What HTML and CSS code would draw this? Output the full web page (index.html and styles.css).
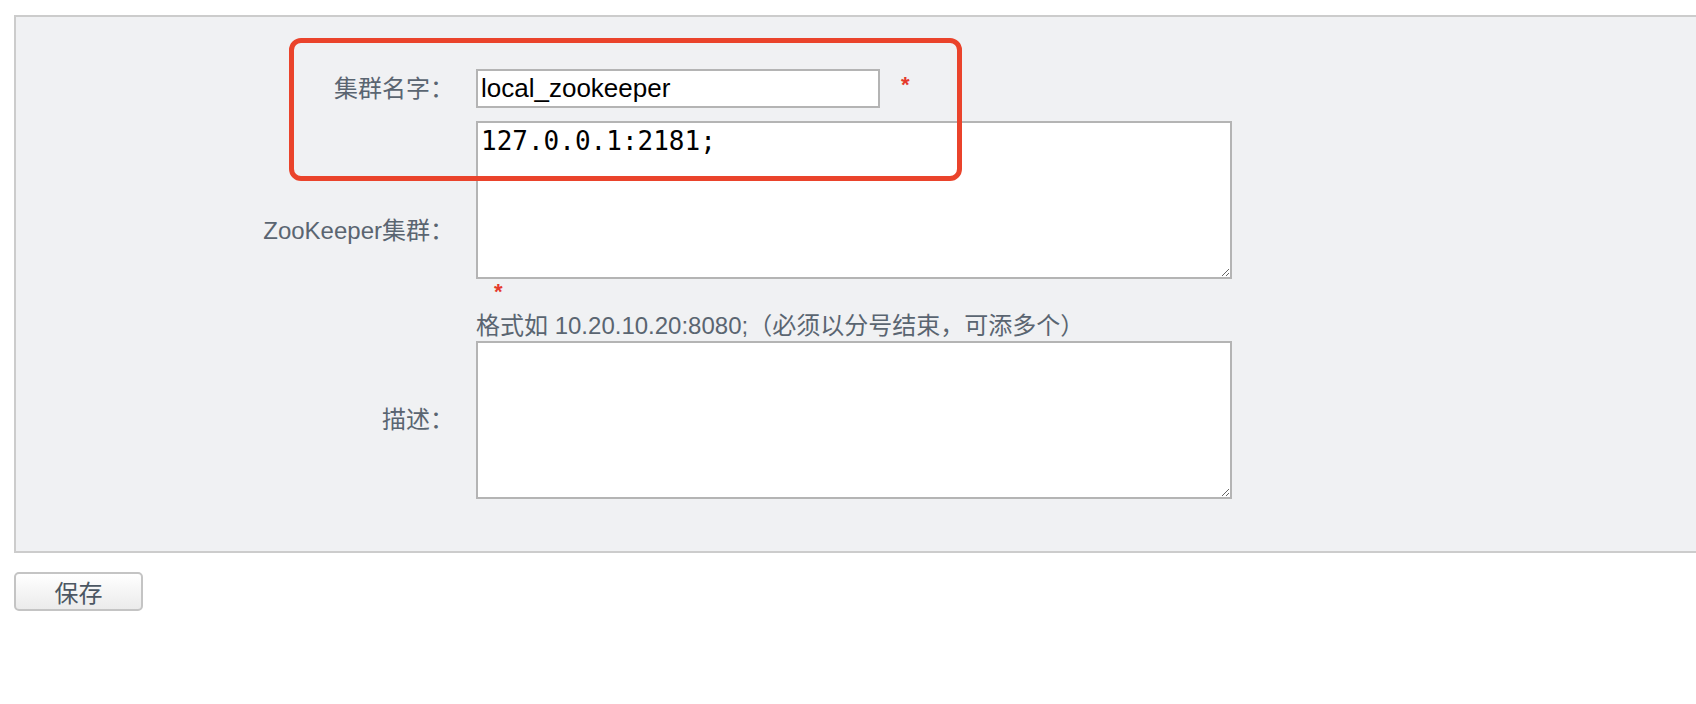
FILE: index.html
```html
<!DOCTYPE html>
<html lang="zh-CN">
<head>
<meta charset="utf-8">
<title>集群配置</title>
<link rel="stylesheet" href="styles.css">
</head>
<body>
<div class="panel">
  <div class="form">
    <div class="label row1">集群名字：</div>
    <div class="field row1">
      <input class="text-input" type="text" value="local_zookeeper">
      <span class="req req-inline">*</span>
    </div>

    <div class="label">ZooKeeper集群：</div>
    <div class="field field-col row2">
      <textarea class="area area-mono">127.0.0.1:2181;</textarea>
      <span class="req req-block">*</span>
      <span class="hint">格式如 10.20.10.20:8080;（必须以分号结束，可添多个）</span>
    </div>

    <div class="label">描述：</div>
    <div class="field">
      <textarea class="area"></textarea>
    </div>
  </div>
</div>
<div class="actions">
  <button class="btn" type="button">保存</button>
</div>
<div class="highlight"></div>
</body>
</html>
```

FILE: styles.css
```css
html, body {
  margin: 0;
  padding: 0;
  background: #ffffff;
  overflow: hidden;
}

body {
  font-family: "Liberation Sans", "Noto Sans CJK SC", sans-serif;
  font-size: 24px;
  color: #5a6571;
  position: relative;
  min-height: 704px;
}

.panel {
  margin: 15px 0 0 14px;
  border: 2px solid #cccccc;
  border-right: 0;
  background: #f0f1f3;
  padding: 52px 0 52px 0;
}

.form {
  display: grid;
  grid-template-columns: 438px 1fr;
  column-gap: 22px;
  align-items: center;
}

.label {
  text-align: right;
  white-space: nowrap;
  line-height: 30px;
  color: #5a6571;
}

.field {
  display: flex;
  align-items: center;
}

.field-col {
  flex-direction: column;
  align-items: flex-start;
}

.row1.field {
  margin-bottom: 13px;
}

.row1.label {
  margin-bottom: 13px;
}

.row2 {
  margin-bottom: 0;
}

.text-input {
  box-sizing: border-box;
  width: 404px;
  height: 39px;
  border: 2px solid #b4b4b4;
  background: #ffffff;
  padding: 0 3px;
  margin: 0;
  font-family: "Liberation Sans", Arial, sans-serif;
  font-size: 26px;
  color: #000000;
  outline: none;
}

.area {
  display: block;
  box-sizing: border-box;
  width: 756px;
  height: 158px;
  border: 2px solid #b4b4b4;
  background: #ffffff;
  padding: 3px 3px;
  margin: 0;
  font-family: "DejaVu Sans Mono", "Liberation Mono", monospace;
  font-size: 26px;
  line-height: 30px;
  color: #000000;
  outline: none;
}

.req {
  color: #e5392c;
  font-family: "Liberation Sans", sans-serif;
  font-size: 22px;
  font-weight: bold;
}

.req-inline {
  margin-left: 21px;
  margin-top: -8px;
}

.req-block {
  display: block;
  line-height: 25px;
  height: 29px;
  padding-left: 18px;
}

.hint {
  display: block;
  line-height: 30px;
  padding-top: 3px;
  color: #5a6571;
  white-space: nowrap;
}

.actions {
  margin: 19px 0 0 14px;
}

.btn {
  box-sizing: border-box;
  width: 129px;
  height: 39px;
  border: 2px solid #c4c4c4;
  border-radius: 5px;
  background: linear-gradient(#ffffff, #ebebeb);
  font-family: "Liberation Sans", "Noto Sans CJK SC", sans-serif;
  font-size: 24px;
  color: #4c5763;
  padding: 0;
  margin: 0;
}

.highlight {
  position: absolute;
  left: 289px;
  top: 38px;
  width: 673px;
  height: 143px;
  box-sizing: border-box;
  border: 5px solid #ea432b;
  border-radius: 12px;
  pointer-events: none;
}
```
